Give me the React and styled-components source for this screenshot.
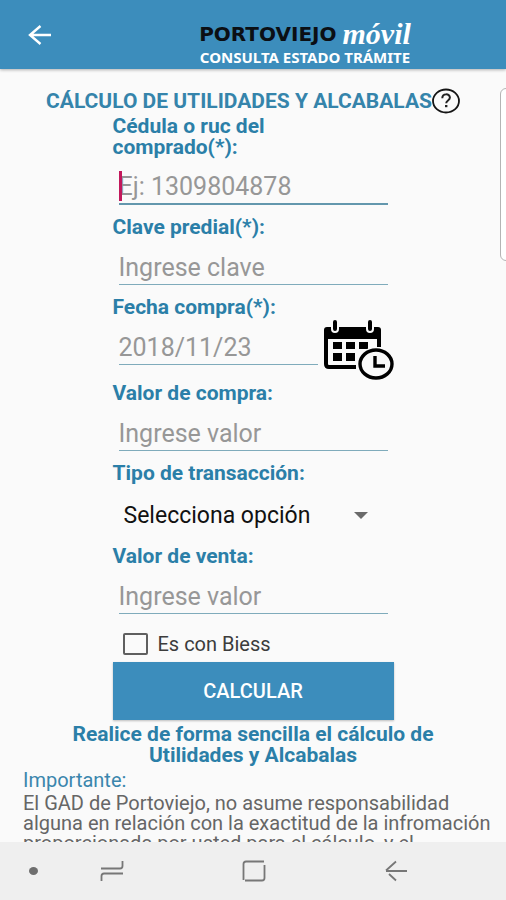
import { useState } from "react";
import styled, { createGlobalStyle } from "styled-components";

const App = () => {
  const [form, setForm] = useState({
    cedula: "",
    clave: "",
    fecha: "",
    compra: "",
    tipo: "",
    venta: "",
    biess: false,
  });

  const onChange = (e) => {
    const { name, type, checked, value } = e.target;
    setForm({ ...form, [name]: type === "checkbox" ? checked : value });
  };

  return (
    <Screen>
      <GlobalStyle />
      <Header>
        <BackBtn type="button" aria-label="Atrás">
          <BackIcon />
        </BackBtn>
        <Brand>
          <BrandName>
            PORTOVIEJO <BrandScript>móvil</BrandScript>
          </BrandName>
          <BrandSub>CONSULTA ESTADO TRÁMITE</BrandSub>
        </Brand>
      </Header>

      <Content>
        <EdgePanel />
        <TitleRow>
          <Title>CÁLCULO DE UTILIDADES Y ALCABALAS</Title>
          <HelpBtn type="button" aria-label="Ayuda">
            <HelpIcon />
          </HelpBtn>
        </TitleRow>

        <Form onSubmit={(e) => e.preventDefault()}>
          <Label htmlFor="cedula">
            Cédula o ruc del
            <br />
            comprado(*):
          </Label>
          <InputBox>
            <Input
              id="cedula"
              name="cedula"
              placeholder="Ej: 1309804878"
              value={form.cedula}
              onChange={onChange}
              $active
            />
            <Caret />
          </InputBox>

          <Label htmlFor="clave">Clave predial(*):</Label>
          <InputBox>
            <Input
              id="clave"
              name="clave"
              placeholder="Ingrese clave"
              value={form.clave}
              onChange={onChange}
            />
          </InputBox>

          <Label htmlFor="fecha">Fecha compra(*):</Label>
          <DateRow>
            <Input
              id="fecha"
              name="fecha"
              placeholder="2018/11/23"
              value={form.fecha}
              onChange={onChange}
            />
            <CalendarBtn type="button" aria-label="Elegir fecha">
              <CalendarIcon />
            </CalendarBtn>
          </DateRow>

          <Label htmlFor="compra">Valor de compra:</Label>
          <InputBox>
            <Input
              id="compra"
              name="compra"
              placeholder="Ingrese valor"
              value={form.compra}
              onChange={onChange}
            />
          </InputBox>

          <Label htmlFor="tipo">Tipo de transacción:</Label>
          <SelectBox>
            <Select id="tipo" name="tipo" value={form.tipo} onChange={onChange}>
              <option value="">Selecciona opción</option>
            </Select>
            <SelectArrow viewBox="0 0 14 7">
              <path d="M0 0h14L7 7z" />
            </SelectArrow>
          </SelectBox>

          <Label htmlFor="venta">Valor de venta:</Label>
          <InputBox>
            <Input
              id="venta"
              name="venta"
              placeholder="Ingrese valor"
              value={form.venta}
              onChange={onChange}
            />
          </InputBox>

          <CheckLabel>
            <Checkbox
              type="checkbox"
              name="biess"
              checked={form.biess}
              onChange={onChange}
            />
            Es con Biess
          </CheckLabel>

          <SubmitBtn type="submit">CALCULAR</SubmitBtn>
        </Form>

        <Tagline>
          Realice de forma sencilla el cálculo de
          <br />
          Utilidades y Alcabalas
        </Tagline>

        <Notice>
          <NoticeTitle>Importante:</NoticeTitle>
          <NoticeText>
            El GAD de Portoviejo, no asume responsabilidad
            <br />
            alguna en relación con la exactitud de la infromación
            <br />
            proporcionada por usted para el cálculo, y el
          </NoticeText>
        </Notice>
      </Content>

      <NavBar>
        <NavDot />
        <NavBtn type="button" aria-label="Recientes">
          <svg width="24" height="24" viewBox="0 0 24 24">
            <path d="M1 9.500h19q2.500 0 2.500-2.500V2M23 14.500H4q-2.500 0-2.500 2.500V22" />
          </svg>
        </NavBtn>
        <NavBtn type="button" aria-label="Inicio">
          <svg width="24" height="24" viewBox="0 0 24 24">
            <path d="M1.500 21V5q0-2.500 2.500-2.500H22M22.500 6V19q0 2.500-2.500 2.500H3" />
          </svg>
        </NavBtn>
        <NavBtn type="button" aria-label="Volver">
          <svg width="24" height="24" viewBox="0 0 24 24">
            <path d="M23 12H2M12 2.500L2 11.500M5 15L12 21.500" />
          </svg>
        </NavBtn>
      </NavBar>
    </Screen>
  );
};
export default App;

const BackIcon = () => (
  <svg width="24" height="20" viewBox="0 0 24 20">
    <path
      d="M23 10H2M12.500 1L2 10l10.500 9"
      fill="none"
      stroke="#fff"
      strokeWidth="2.400"
    />
  </svg>
);

const HelpIcon = () => (
  <svg width="28" height="26" viewBox="0 0 28 26">
    <ellipse
      cx="14"
      cy="13"
      rx="13"
      ry="11.500"
      fill="none"
      stroke="#151515"
      strokeWidth="1.800"
    />
    <path
      d="M10.300 10.200c0-5 7.600-5 7.600-.6 0 2.900-3.700 2.800-3.700 5.600"
      fill="none"
      stroke="#222"
      strokeWidth="2"
    />
    <rect x="13" y="17" width="2.400" height="2.200" fill="#222" />
  </svg>
);

const CalendarIcon = () => (
  <svg width="71" height="61" viewBox="0 0 71 61">
    <path
      d="M3 12v33q0 3 3 3h27M56 14v14"
      fill="none"
      stroke="#000"
      strokeWidth="4"
    />
    <path d="M1 20v-9q0-3 3-3h51q3 0 3 3v9z" />
    <g stroke="#fafafa" strokeWidth="8" strokeLinecap="round">
      <path d="M12 4v6M47 4v6" />
    </g>
    <g stroke="#000" strokeWidth="4" strokeLinecap="round">
      <path d="M12 3v7M47 3v7" />
    </g>
    <path d="M10 23h9v7h-9zM23 23h9v7h-9zM36 23h9v7h-9zM10 34h9v8h-9zM23 34h9v8h-9z" />
    <ellipse cx="53" cy="45" rx="19" ry="17" fill="#fafafa" />
    <ellipse
      cx="53"
      cy="45"
      rx="16"
      ry="14"
      fill="none"
      stroke="#000"
      strokeWidth="3.400"
    />
    <path d="M52 37v10h10" fill="none" stroke="#000" strokeWidth="3.400" />
  </svg>
);

const GlobalStyle = createGlobalStyle`
  * {
    box-sizing: border-box;
  }
  body {
    margin: 0;
    background: #fafafa;
    font-family: Roboto, "Liberation Sans", sans-serif;
  }
  button, input, select {
    font-family: inherit;
  }
  button {
    padding: 0;
    border: 0;
    background: none;
    cursor: pointer;
  }
  svg {
    display: block;
  }
`;

const Screen = styled.div`
  display: flex;
  flex-direction: column;
  height: 100vh;
`;

const Header = styled.header`
  display: flex;
  align-items: flex-start;
  flex-shrink: 0;
  padding: 20px 28px 0;
  height: 69px;
  background: #3c8dbc;
  box-shadow: 0 1px 3px rgba(0, 0, 0, 0.3);
  z-index: 1;
`;

const BackBtn = styled.button`
  padding-top: 5px;
`;

const Brand = styled.div`
  flex: 1;
  padding-left: 80px;
  text-align: center;
`;

const BrandName = styled.div`
  display: flex;
  align-items: center;
  justify-content: center;
  gap: 6px;
  height: 28px;
  color: #0b0f14;
  font-family: "DejaVu Sans", sans-serif;
  font-size: 20px;
  font-weight: 700;
`;

const BrandScript = styled.span`
  color: #fff;
  font-family: "Liberation Serif", serif;
  font-size: 30px;
  font-style: italic;
  line-height: 28px;
`;

const BrandSub = styled.div`
  color: #fff;
  font-family: "Noto Sans", sans-serif;
  font-size: 15px;
  font-weight: 700;
  line-height: 18px;
`;

const Content = styled.main`
  position: relative;
  flex: 1;
  min-height: 0;
  padding-top: 18px;
  overflow: hidden;
`;

/* handle of the phone's edge panel, half outside of the screen */
const EdgePanel = styled.div`
  position: absolute;
  top: 19px;
  right: -10px;
  width: 16px;
  height: 173px;
  border: 1px solid #b4b4b4;
  border-radius: 6px;
  background: #fff;
`;

const TitleRow = styled.div`
  display: flex;
  align-items: center;
  justify-content: center;
  height: 28px;
  margin-bottom: 1px;
`;

const Title = styled.h1`
  margin: 0;
  color: #3584ab;
  font-size: 21px;
  font-weight: 700;
  line-height: 21px;
  white-space: nowrap;
`;

const HelpBtn = styled.button`
  flex-shrink: 0;
`;

const Form = styled.form`
  max-width: 281px;
  margin: 0 auto;
`;

const Label = styled.label`
  display: block;
  color: #2b7fa8;
  font-size: 21px;
  font-weight: 700;
  line-height: 21px;
`;

const InputBox = styled.div`
  position: relative;
  padding: 0 6px 12px;
`;

const Input = styled.input`
  display: block;
  width: 100%;
  min-width: 0;
  height: 47px;
  padding: 12px 0 0;
  border: 0;
  border-bottom: ${({ $active }) =>
    $active ? "2px solid #6397ad" : "1px solid #7fabbb"};
  outline: 0;
  background: none;
  color: #222;
  font-size: 25px;
  &::placeholder {
    color: #979797;
    opacity: 1;
  }
`;

const Caret = styled.span`
  position: absolute;
  top: 13px;
  left: 6px;
  width: 3px;
  height: 30px;
  background: #c2185b;
`;

const DateRow = styled.div`
  display: flex;
  align-items: flex-start;
  gap: 5px;
  height: 65px;
  padding-left: 6px;
`;

const CalendarBtn = styled.button`
  flex-shrink: 0;
  padding-top: 1px;
`;

const SelectBox = styled.div`
  position: relative;
`;

const Select = styled.select`
  display: block;
  width: 100%;
  height: 62px;
  padding: 0 40px 0 11px;
  border: 0;
  outline: 0;
  appearance: none;
  background: none;
  color: #111;
  font-size: 23px;
`;

const SelectArrow = styled.svg`
  position: absolute;
  top: 28px;
  right: 26px;
  width: 14px;
  height: 7px;
  fill: #6a6a6a;
  pointer-events: none;
`;

const CheckLabel = styled.label`
  display: flex;
  align-items: center;
  gap: 10px;
  height: 36px;
  padding-left: 10px;
  color: #3c3c3c;
  font-size: 20px;
`;

const Checkbox = styled.input`
  width: 25px;
  height: 22px;
  margin: 0;
  border: 2px solid #5f5f5f;
  border-radius: 2px;
  appearance: none;
  &:checked {
    background: #3c8dbc;
  }
`;

const SubmitBtn = styled.button`
  display: block;
  width: 100%;
  height: 58px;
  background: #3c8dbc;
  box-shadow: 0 1px 2px rgba(0, 0, 0, 0.25);
  color: #fff;
  font-size: 20px;
  font-weight: 500;
`;

const Tagline = styled.p`
  margin: 4px 0;
  color: #2b7fa8;
  font-size: 21px;
  font-weight: 700;
  line-height: 21px;
  text-align: center;
`;

const Notice = styled.section`
  padding: 0 23px;
`;

const NoticeTitle = styled.h2`
  margin: 0 0 3px;
  color: #3a86ad;
  font-size: 20px;
  font-weight: 400;
  line-height: 20px;
`;

const NoticeText = styled.p`
  margin: 0;
  color: #666;
  font-size: 20px;
  line-height: 20px;
  white-space: nowrap;
`;

const NavBar = styled.nav`
  display: grid;
  grid-template-columns: 16px 1fr 1fr 1fr;
  align-items: center;
  flex-shrink: 0;
  height: 58px;
  padding: 0 39px 0 25px;
  background: #efefef;
`;

const NavDot = styled.span`
  justify-self: center;
  width: 9px;
  height: 8px;
  border-radius: 50%;
  background: #6e6e6e;
`;

const NavBtn = styled.button`
  justify-self: center;
  svg {
    fill: none;
    stroke: #777;
    stroke-width: 1.800;
  }
`;
